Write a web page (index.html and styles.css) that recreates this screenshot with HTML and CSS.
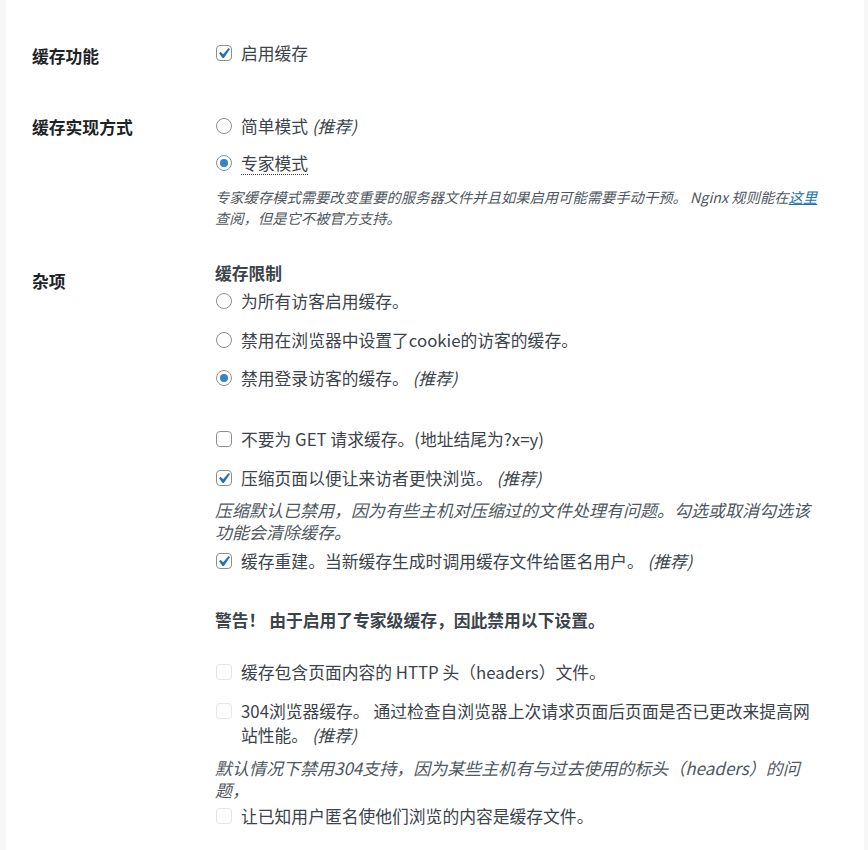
FILE: index.html
```html
<!DOCTYPE html>
<html lang="zh-CN">
<head>
<meta charset="utf-8">
<title>WP Super Cache 设置</title>
<link rel="stylesheet" href="styles.css">
</head>
<body>
<div class="panel">
  <div class="row">
    <div class="th th-1">缓存功能</div>
    <div class="td">
      <label class="opt">
        <span class="box"><svg viewBox="3.8 2.9 13.3 13.3" width="14" height="14"><path d="M14.83 4.89l1.34.94-5.81 8.38H9.02L5.78 9.67l1.34-1.25 2.57 2.4z" fill="#2271b1"/></svg></span>
        <span class="txt">启用缓存</span>
      </label>
    </div>
  </div>

  <div class="row row-2">
    <div class="th th-2">缓存实现方式</div>
    <div class="td">
      <label class="opt">
        <span class="box radio"></span>
        <span class="txt">简单模式 <em>(推荐)</em></span>
      </label>
      <label class="opt gap-13">
        <span class="box radio"><span class="dot"></span></span>
        <span class="txt"><abbr class="abbr">专家模式</abbr></span>
      </label>
      <p class="desc small gap-11">专家缓存模式需要改变重要的服务器文件并且如果启用可能需要手动干预。 Nginx 规则能在<a href="#" class="link">这里</a>查阅，但是它不被官方支持。</p>
    </div>
  </div>

  <div class="row row-3">
    <div class="th th-3">杂项</div>
    <div class="td">
      <div class="sub">缓存限制</div>
      <label class="opt gap-4">
        <span class="box radio"></span>
        <span class="txt">为所有访客启用缓存。</span>
      </label>
      <label class="opt gap-145">
        <span class="box radio"></span>
        <span class="txt">禁用在浏览器中设置了cookie的访客的缓存。</span>
      </label>
      <label class="opt gap-145">
        <span class="box radio"><span class="dot"></span></span>
        <span class="txt">禁用登录访客的缓存。 <em>(推荐)</em></span>
      </label>

      <label class="opt gap-37">
        <span class="box"></span>
        <span class="txt">不要为 GET 请求缓存。(地址结尾为?x=y)</span>
      </label>
      <label class="opt gap-15">
        <span class="box"><svg viewBox="3.8 2.9 13.3 13.3" width="14" height="14"><path d="M14.83 4.89l1.34.94-5.81 8.38H9.02L5.78 9.67l1.34-1.25 2.57 2.4z" fill="#2271b1"/></svg></span>
        <span class="txt">压缩页面以便让来访者更快浏览。 <em>(推荐)</em></span>
      </label>
      <p class="desc gap-9">压缩默认已禁用，因为有些主机对压缩过的文件处理有问题。勾选或取消勾选该功能会清除缓存。</p>
      <label class="opt gap-6">
        <span class="box"><svg viewBox="3.8 2.9 13.3 13.3" width="14" height="14"><path d="M14.83 4.89l1.34.94-5.81 8.38H9.02L5.78 9.67l1.34-1.25 2.57 2.4z" fill="#2271b1"/></svg></span>
        <span class="txt">缓存重建。当新缓存生成时调用缓存文件给匿名用户。 <em>(推荐)</em></span>
      </label>

      <div class="sub warn">警告！ 由于启用了专家级缓存，因此禁用以下设置。</div>

      <label class="opt gap-28">
        <span class="box disabled"></span>
        <span class="txt">缓存包含页面内容的 HTTP 头（headers）文件。</span>
      </label>
      <label class="opt gap-15">
        <span class="box disabled"></span>
        <span class="txt"><span class="line">304浏览器缓存。 通过检查自浏览器上次请求页面后页面是否已更改来提高网</span><span class="line">站性能。 <em>(推荐)</em></span></span>
      </label>
      <p class="desc gap-10">默认情况下禁用304支持，因为某些主机有与过去使用的标头（headers）的问题，</p>
      <label class="opt gap-3">
        <span class="box disabled"></span>
        <span class="txt">让已知用户匿名使他们浏览的内容是缓存文件。</span>
      </label>
    </div>
  </div>
</div>
</body>
</html>
```

FILE: styles.css
```css
html, body {
  margin: 0;
  padding: 0;
}

body {
  background: #f7f7f7;
  font-family: "Noto Sans CJK SC", "Noto Sans", sans-serif;
  font-size: 16.8px;
  color: #3c434a;
}

.panel {
  margin-left: 6px;
  width: 858px;
  min-height: 850px;
  box-sizing: border-box;
  background: #ffffff;
  padding: 41px 0 0 26px;
}

.row {
  display: grid;
  grid-template-columns: 183px 610px;
}

.row-2 { margin-top: 46px; }
.row-3 { margin-top: 33px; }

.th {
  font-weight: 700;
  line-height: 24px;
  color: #1d2327;
}

.th-1 { padding-top: 3px; }
.th-2 { padding-top: 1px; }
.th-3 { padding-top: 8px; }

.td {
  display: flex;
  flex-direction: column;
  align-items: stretch;
}

.opt {
  display: flex;
  align-items: flex-start;
  line-height: 24px;
}

.txt {
  display: block;
  flex: 1 1 0;
  min-width: 0;
}

.line {
  display: block;
}

.opt em,
.desc {
  font-style: italic;
}

.box {
  flex: none;
  box-sizing: border-box;
  width: 16px;
  height: 16px;
  margin: 4px 9px 0 1px;
  border: 1px solid #8c8f94;
  border-radius: 4px;
  background: #ffffff;
  display: flex;
  align-items: center;
  justify-content: center;
}

.box svg {
  display: block;
}

.box.radio {
  border-radius: 50%;
}

.dot {
  width: 8px;
  height: 8px;
  border-radius: 50%;
  background: #3582c4;
}

.box.disabled {
  border-color: rgba(220, 220, 222, 0.75);
  background: rgba(255, 255, 255, 0.5);
}

.abbr {
  text-decoration-line: underline;
  text-decoration-style: dotted;
  text-decoration-color: #3c434a;
  text-decoration-thickness: 1px;
  text-underline-offset: 4px;
}

.desc {
  margin: 0;
  font-size: 17px;
  line-height: 22px;
  color: #50575e;
}

.desc.small {
  font-size: 14.3px;
  line-height: 21px;
}

.link {
  color: #2271b1;
  text-decoration: underline;
}

.sub {
  font-weight: 700;
  line-height: 24px;
  color: #3c434a;
}

.warn { margin-top: 35px; }

.gap-3 { margin-top: 3px; }
.gap-4 { margin-top: 4px; }
.gap-6 { margin-top: 6px; }
.gap-9 { margin-top: 9px; }
.gap-10 { margin-top: 10px; }
.gap-11 { margin-top: 11px; }
.gap-13 { margin-top: 13px; }
.gap-145 { margin-top: 14.5px; }
.gap-15 { margin-top: 15px; }
.gap-28 { margin-top: 28px; }
.gap-37 { margin-top: 37px; }
```
